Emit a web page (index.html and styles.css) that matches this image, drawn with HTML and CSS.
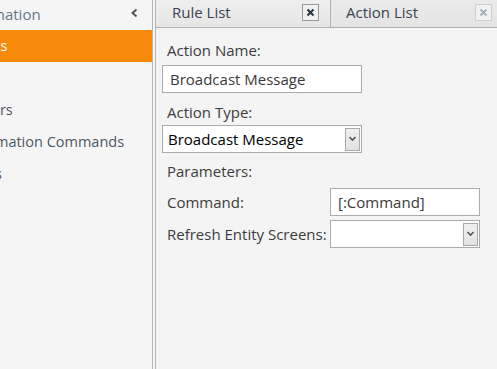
FILE: index.html
```html
<!DOCTYPE html>
<html>
<head>
<meta charset="utf-8">
<link rel="stylesheet" href="styles.css">
</head>
<body>
<div class="app">
  <aside class="side">
    <div class="side-inner">
      <div class="side-head"><span class="side-title">Automation</span></div>
      <ul class="menu">
        <li class="menu-item active">Events</li>
        <li class="menu-item">Logs</li>
        <li class="menu-item">Folders</li>
        <li class="menu-item">Automation Commands</li>
        <li class="menu-item">Alerts</li>
      </ul>
    </div>
    <span class="collapse">
      <svg width="9" height="10" viewBox="0 0 9 10"><path d="M6.5 1.5 L2.5 5 L6.5 8.5" fill="none" stroke="#555" stroke-width="2"/></svg>
    </span>
  </aside>
  <div class="gap"></div>
  <main class="main">
    <div class="tabs">
      <div class="tab tab-first">
        <span class="tab-label">Rule List</span>
        <span class="close close-on">
          <svg width="9" height="9" viewBox="0 0 9 9"><path d="M1.5 1.5 L7.5 7.5 M7.5 1.5 L1.5 7.5" stroke="#2a3440" stroke-width="2"/></svg>
        </span>
      </div>
      <div class="tab tab-second">
        <span class="tab-label">Action List</span>
        <span class="close close-off">
          <svg width="9" height="9" viewBox="0 0 9 9"><path d="M1.5 1.5 L7.5 7.5 M7.5 1.5 L1.5 7.5" stroke="#a9b1ba" stroke-width="2"/></svg>
        </span>
      </div>
    </div>
    <div class="content">
      <div class="label l-name">Action Name:</div>
      <div class="field wide input-text">Broadcast Message</div>
      <div class="label l-type">Action Type:</div>
      <div class="field wide select">
        <span class="select-text">Broadcast Message</span>
        <span class="drop"><svg width="9" height="6" viewBox="0 0 9 6"><path d="M1.5 1 L4.5 4 L7.5 1" fill="none" stroke="#555" stroke-width="1.6"/></svg></span>
      </div>
      <div class="label l-params">Parameters:</div>
      <div class="params">
        <div class="plabel">Command:</div>
        <div class="field narrow input-text">[:Command]</div>
        <div class="plabel">Refresh Entity Screens:</div>
        <div class="field narrow select">
          <span class="select-text"></span>
          <span class="drop"><svg width="9" height="6" viewBox="0 0 9 6"><path d="M1.5 1 L4.5 4 L7.5 1" fill="none" stroke="#555" stroke-width="1.6"/></svg></span>
        </div>
      </div>
    </div>
  </main>
</div>
</body>
</html>
```

FILE: styles.css
```css
html, body {
  margin: 0;
  padding: 0;
  width: 497px;
  height: 369px;
  overflow: hidden;
  background: #f5f5f5;
  font-family: "Open Sans", "Noto Sans", sans-serif;
}

.app {
  display: flex;
  height: 369px;
}

.side {
  position: relative;
  width: 152px;
  flex: none;
  border-right: 1px solid #b5b5b5;
  background: #f5f5f5;
  overflow: hidden;
}

.side-inner {
  margin-left: -37px;
  white-space: nowrap;
}

.side-head {
  height: 30px;
  display: flex;
  align-items: center;
}

.side-title {
  font-size: 15px;
  color: #64768a;
  margin-left: -5px;
  margin-top: -3px;
}

.collapse {
  position: absolute;
  left: 130px;
  top: 8px;
  display: flex;
}

.menu {
  list-style: none;
  margin: 0;
  padding: 0;
}

.menu-item {
  height: 32px;
  line-height: 32px;
  font-size: 14.5px;
  color: #4f5862;
}

.menu-item.active {
  background: #f78a0a;
  color: #ffffff;
}

.gap {
  width: 2px;
  flex: none;
}

.main {
  flex: 1;
  border-left: 1px solid #b5b5b5;
  display: flex;
  flex-direction: column;
  min-width: 0;
}

.tabs {
  display: flex;
  height: 27px;
  border-bottom: 1px solid #b0b0b0;
  background: linear-gradient(#ebebeb, #e4e4e4);
}

.tab {
  display: flex;
  align-items: center;
  box-sizing: border-box;
  height: 27px;
}

.tab-first {
  width: 175px;
  border-right: 1px solid #b0b0b0;
  padding-left: 16px;
  background: linear-gradient(#eeeeee, #e6e6e6);
}

.tab-second {
  flex: 1;
  padding-left: 15px;
}

.tab-label {
  flex: 1;
  font-size: 15px;
  color: #3a4350;
  line-height: 20px;
  margin-top: -3px;
}

.close {
  width: 15px;
  height: 15px;
  display: flex;
  align-items: center;
  justify-content: center;
  margin-top: -3px;
}

.tab-first .close {
  margin-right: 11px;
}

.tab-second .close {
  margin-right: 5px;
}

.close-on {
  border: 1px solid #9a9a9a;
  background: #f0f0f0;
}

.close-off {
  border: 1px solid #cfcfcf;
  background: #f2f2f2;
}

.content {
  flex: 1;
  background: #f4f4f4;
  padding: 11px 0 0 6px;
}

.label {
  font-size: 15px;
  color: #3c3c3c;
  padding-left: 5px;
  line-height: 22px;
  height: 22px;
}

.l-name { margin-top: 0; }
.l-type { margin-top: 8px; }
.l-params { margin-top: 7px; }

.field {
  box-sizing: border-box;
  height: 28px;
  border: 1px solid #ababab;
  background: #ffffff;
  display: flex;
  align-items: center;
  font-size: 15px;
}

.wide {
  width: 200px;
  margin-top: 4px;
}

.l-type + .select { margin-top: 2px; }

.input-text {
  padding-left: 7px;
  color: #3a3a3a;
}

.select {
  padding-left: 5px;
  color: #000000;
}

.select-text {
  flex: 1;
}

.drop {
  box-sizing: border-box;
  width: 15px;
  height: 23px;
  margin-right: 1px;
  border: 1px solid #a8a8a8;
  background: linear-gradient(#efefef, #e2e2e2);
  display: flex;
  align-items: center;
  justify-content: center;
}

.params {
  display: grid;
  grid-template-columns: 168px 150px;
  row-gap: 4px;
  margin-top: 6px;
  align-items: center;
}

.plabel {
  font-size: 15px;
  color: #3c3c3c;
  padding-left: 5px;
  white-space: nowrap;
  overflow: hidden;
}

.narrow {
  width: 150px;
}
```
